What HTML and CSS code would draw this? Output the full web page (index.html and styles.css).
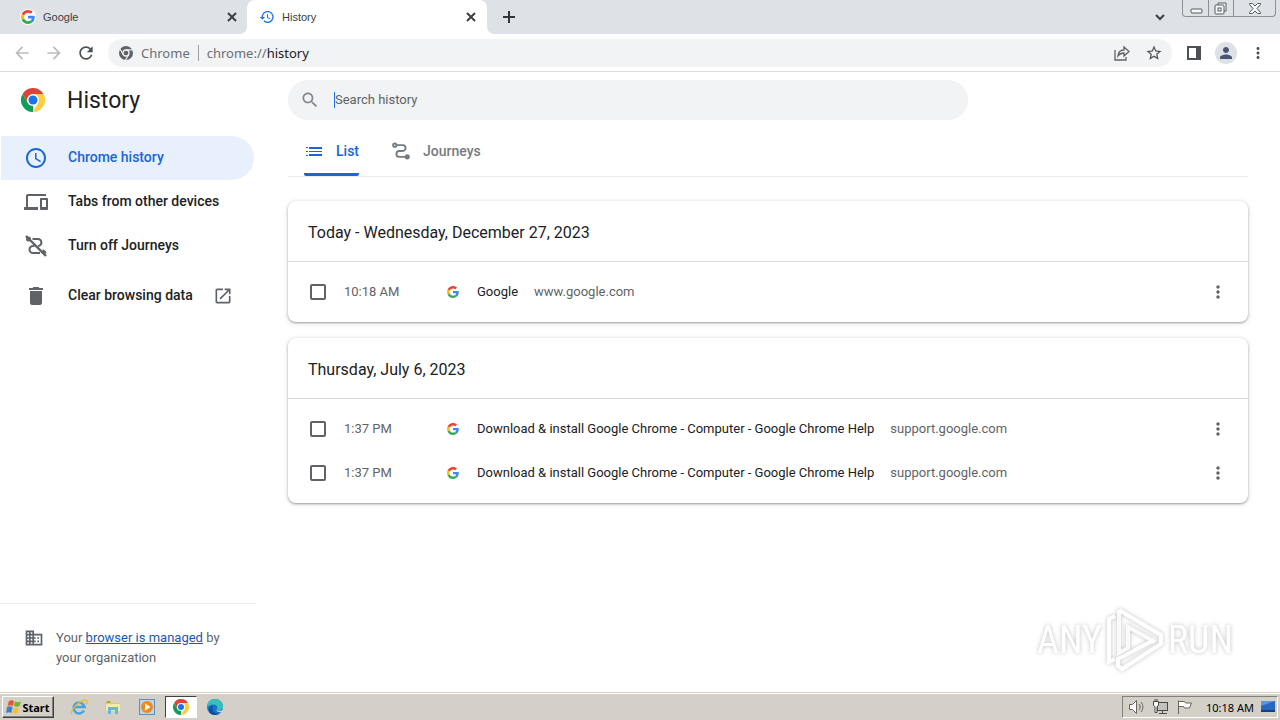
FILE: index.html
```html
<!DOCTYPE html>
<html lang="en">
<head>
    <meta charset="UTF-8">
    <meta name="viewport" content="width=device-width, initial-scale=1.0">
    <title>History</title>
    <link rel="stylesheet" href="styles.css">
</head>
<body>
    <!-- Shared symbols -->
    <svg class="defs" width="0" height="0">
        <symbol id="google" viewBox="0 0 48 48">
            <path fill="#ea4335" d="M24 9.5c3.54 0 6.71 1.22 9.21 3.6l6.85-6.85C35.9 2.38 30.47 0 24 0 14.62 0 6.51 5.38 2.56 13.22l7.98 6.19C12.43 13.72 17.74 9.5 24 9.5z"/>
            <path fill="#4285f4" d="M46.98 24.55c0-1.57-.15-3.09-.38-4.55H24v9.02h12.94c-.58 2.96-2.26 5.48-4.78 7.18l7.73 6c4.51-4.18 7.09-10.36 7.09-17.65z"/>
            <path fill="#fbbc05" d="M10.53 28.59c-.48-1.45-.76-2.99-.76-4.59s.27-3.14.76-4.59l-7.98-6.19C.92 16.46 0 20.12 0 24c0 3.88.92 7.54 2.56 10.78l7.97-6.19z"/>
            <path fill="#34a853" d="M24 48c6.48 0 11.93-2.13 15.89-5.81l-7.73-6c-2.15 1.45-4.92 2.3-8.16 2.3-6.26 0-11.57-4.22-13.47-9.91l-7.98 6.19C6.51 42.62 14.62 48 24 48z"/>
        </symbol>
        <symbol id="chrome" viewBox="0 0 48 48">
            <path fill="#0f9d58" d="M24 24 24 48A24 24 0 0 1 3.2 12L13.6 30z"/>
            <path fill="#ffcd40" d="M24 12H44.8A24 24 0 0 1 24 48L34.4 30z"/>
            <path fill="#db4437" d="M24 12H44.8A24 24 0 0 0 3.2 12L13.6 30 24 24z"/>
            <circle cx="24" cy="24" r="12" fill="#fff"/>
            <circle cx="24" cy="24" r="9" fill="#1a73e8"/>
        </symbol>
        <symbol id="dots" viewBox="0 0 24 24">
            <path d="M12 8c1.1 0 2-.9 2-2s-.9-2-2-2-2 .9-2 2 .9 2 2 2zm0 2c-1.1 0-2 .9-2 2s.9 2 2 2 2-.9 2-2-.9-2-2-2zm0 6c-1.1 0-2 .9-2 2s.9 2 2 2 2-.9 2-2-.9-2-2-2z"/>
        </symbol>
        <symbol id="close" viewBox="0 0 16 16">
            <path d="M4 4l8 8M12 4l-8 8" stroke="#3c4043" stroke-width="2"/>
        </symbol>
        <symbol id="arrow" viewBox="0 0 24 24">
            <path d="M20 11H7.83l5.59-5.59L12 4l-8 8 8 8 1.41-1.41L7.83 13H20v-2z"/>
        </symbol>
    </svg>

    <!-- Tab strip -->
    <div class="tabstrip">
        <div class="tab">
            <span class="tab-icon round"><svg width="14" height="14"><use href="#google"/></svg></span>
            <span class="tab-title">Google</span>
            <button class="tab-close" aria-label="Close"><svg width="16" height="16"><use href="#close"/></svg></button>
        </div>
        <div class="tab active">
            <span class="tab-icon"><svg width="16" height="16" viewBox="0 0 24 24" fill="#1a73e8"><path d="M13 3c-4.97 0-9 4.03-9 9H1l3.89 3.89.07.14L9 12H6c0-3.87 3.13-7 7-7s7 3.13 7 7-3.13 7-7 7c-1.93 0-3.68-.79-4.94-2.06l-1.42 1.42C8.27 19.99 10.51 21 13 21c4.97 0 9-4.03 9-9s-4.03-9-9-9zm-1 5v5l4.28 2.54.72-1.21-3.5-2.08V8H12z"/></svg></span>
            <span class="tab-title">History</span>
            <button class="tab-close" aria-label="Close"><svg width="16" height="16"><use href="#close"/></svg></button>
        </div>
        <button class="new-tab" aria-label="New tab"><svg width="14" height="14" viewBox="0 0 14 14"><path d="M7 1v12M1 7h12" stroke="#303640" stroke-width="2"/></svg></button>
        <button class="tab-search" aria-label="Search tabs"><svg width="12" height="12" viewBox="0 0 12 12"><path d="M2 4l4 4 4-4" fill="none" stroke="#3c4043" stroke-width="2"/></svg></button>
        <div class="window-controls">
            <button aria-label="Minimize"><svg width="14" height="14" viewBox="0 0 14 14"><rect x="2" y="8" width="11" height="4" rx="1"/></svg></button>
            <button aria-label="Restore"><svg width="14" height="14" viewBox="0 0 14 14"><path d="M4 4V2h8v8h-2"/><rect x="1" y="4" width="9" height="9" rx="1"/><rect x="4" y="7" width="3" height="3"/></svg></button>
            <button class="wide" aria-label="Close window"><svg width="14" height="14" viewBox="0 0 14 14"><path d="M1.5 2.5h3L7 5l2.500-2.500h3v1L9 7.500l3.500 4v1h-3L7 10l-2.500 2.500h-3v-1L5 7.500l-3.500-4z"/></svg></button>
        </div>
    </div>

    <!-- Toolbar -->
    <div class="toolbar">
        <button class="tool dim" aria-label="Back"><svg width="20" height="20"><use href="#arrow"/></svg></button>
        <button class="tool dim" aria-label="Forward"><svg class="flip" width="20" height="20"><use href="#arrow"/></svg></button>
        <button class="tool" aria-label="Reload"><svg width="20" height="20" viewBox="0 0 24 24"><path d="M17.65 6.35C16.2 4.9 14.21 4 12 4c-4.42 0-7.99 3.58-7.99 8s3.57 8 7.99 8c3.73 0 6.84-2.55 7.73-6h-2.08c-.82 2.33-3.04 4-5.65 4-3.31 0-6-2.69-6-6s2.69-6 6-6c1.66 0 3.14.69 4.22 1.78L13 11h7V4l-2.35 2.35z"/></svg></button>
        <div class="omnibox">
            <svg width="16" height="16" viewBox="0 0 16 16">
                <circle cx="8" cy="8" r="7" fill="#5f6368"/>
                <circle cx="8" cy="8" r="3" fill="none" stroke="#f1f3f4" stroke-width="1.3"/>
                <path d="M8 4.8h6.5M5.2 9.5 2 4M10.8 9.5 7.5 15" stroke="#f1f3f4" stroke-width="1.2"/>
            </svg>
            <span class="scheme">Chrome</span>
            <div class="url" role="textbox" aria-label="Address" contenteditable="true" spellcheck="false">chrome://<b>history</b></div>
            <button class="omni-btn" aria-label="Share"><svg width="18" height="18" viewBox="0 0 18 18" fill="none" stroke="#5f6368" stroke-width="1.3"><path d="M2 6v10h11v-3"/><path d="M5 12c.3-4 2.500-6 6-6V3l5 4.500-5 4.500V9c-2.500 0-4.500.8-6 3z"/></svg></button>
            <button class="omni-btn" aria-label="Bookmark"><svg width="18" height="18" viewBox="0 0 24 24"><path d="M22 9.24l-7.19-.62L12 2 9.19 8.63 2 9.24l5.46 4.73L5.82 21 12 17.27 18.18 21l-1.63-7.03L22 9.24zM12 15.4l-3.76 2.27 1-4.28-3.32-2.88 4.38-.38L12 6.1l1.71 4.04 4.38.38-3.32 2.88 1 4.28L12 15.4z"/></svg></button>
        </div>
        <button class="tool" aria-label="Side panel"><svg width="16" height="16" viewBox="0 0 16 16"><path fill-rule="evenodd" d="M1 1h14v14H1zM3 3v10h7V3z"/></svg></button>
        <button class="tool" aria-label="Profile"><span class="avatar"><svg width="18" height="18" viewBox="0 0 24 24" fill="#4a5672"><path d="M12 12c2.21 0 4-1.79 4-4s-1.79-4-4-4-4 1.79-4 4 1.79 4 4 4zm0 2c-2.67 0-8 1.34-8 4v2h16v-2c0-2.66-5.33-4-8-4z"/></svg></span></button>
        <button class="tool" aria-label="Menu"><svg width="18" height="18"><use href="#dots"/></svg></button>
    </div>

    <div class="page">
        <!-- Sidebar -->
        <aside class="sidebar">
            <div class="brand">
                <svg width="24" height="24"><use href="#chrome"/></svg>
                <h1>History</h1>
            </div>
            <nav>
                <a href="#" class="selected">
                    <svg width="24" height="24" viewBox="0 0 24 24"><path d="M11.99 2C6.47 2 2 6.48 2 12s4.47 10 9.99 10C17.52 22 22 17.52 22 12S17.52 2 11.99 2zM12 20c-4.42 0-8-3.58-8-8s3.58-8 8-8 8 3.58 8 8-3.58 8-8 8zm.5-13H11v6l5.25 3.15.75-1.23-4.5-2.67z"/></svg>
                    <span>Chrome history</span>
                </a>
                <a href="#">
                    <svg width="24" height="24" viewBox="0 0 24 24"><path d="M4 6h18V4H4c-1.1 0-2 .9-2 2v11H0v3h14v-3H4V6zm19 2h-6c-.55 0-1 .45-1 1v10c0 .55.45 1 1 1h6c.55 0 1-.45 1-1V9c0-.55-.45-1-1-1zm-1 9h-4v-7h4v7z"/></svg>
                    <span>Tabs from other devices</span>
                </a>
                <a href="#">
                    <svg width="24" height="24" viewBox="0 0 24 24" fill="none" stroke="#5f6368" stroke-width="2"><path d="M8.5 5H14a3.5 3.5 0 0 1 1.5 6.6L14 12M10.5 11.5 9 12a3.3 3.3 0 0 0 0 7h7"/><path d="M2 2l20 20" stroke-width="2.4"/><circle cx="4.5" cy="5" r="1.5"/><path d="M18.5 17a2.5 2.5 0 0 1 2.5 2.5" stroke-width="3"/></svg>
                    <span>Turn off Journeys</span>
                </a>
                <a href="#" class="clear">
                    <svg width="24" height="24" viewBox="0 0 24 24"><path d="M6 19c0 1.1.9 2 2 2h8c1.1 0 2-.9 2-2V7H6v12zM19 4h-3.5l-1-1h-5l-1 1H5v2h14V4z"/></svg>
                    <span>Clear browsing data</span>
                    <svg width="20" height="20" viewBox="0 0 24 24"><path d="M19 19H5V5h7V3H5c-1.11 0-2 .9-2 2v14c0 1.1.89 2 2 2h14c1.1 0 2-.9 2-2v-7h-2v7zM14 3v2h3.59l-9.83 9.83 1.41 1.41L19 6.41V10h2V3h-7z"/></svg>
                </a>
            </nav>
            <div class="managed">
                <svg width="20" height="20" viewBox="0 0 24 24"><path d="M12 7V3H2v18h20V7H12zM6 19H4v-2h2v2zm0-4H4v-2h2v2zm0-4H4V9h2v2zm0-4H4V5h2v2zm4 12H8v-2h2v2zm0-4H8v-2h2v2zm0-4H8V9h2v2zm0-4H8V5h2v2zm10 12h-8v-2h2v-2h-2v-2h2v-2h-2V9h8v10zm-2-8h-2v2h2v-2zm0 4h-2v2h2v-2z"/></svg>
                <p>Your <a href="#">browser is managed</a> by<br>your organization</p>
            </div>
        </aside>

        <!-- History list -->
        <main>
            <label class="search">
                <svg width="20" height="20" viewBox="0 0 24 24"><path d="M15.5 14h-.79l-.28-.27C15.41 12.59 16 11.11 16 9.5 16 5.91 13.09 3 9.5 3S3 5.91 3 9.5 5.91 16 9.5 16c1.61 0 3.09-.59 4.23-1.57l.27.28v.79l5 4.99L20.49 19l-4.99-5zm-6 0C7.01 14 5 11.99 5 9.5S7.01 5 9.5 5 14 7.01 14 9.5 11.99 14 9.5 14z"/></svg>
                <input type="text" placeholder="Search history" aria-label="Search history">
            </label>

            <div class="views">
                <button class="view current">
                    <svg width="20" height="20" viewBox="0 0 20 20"><path d="M2 6h2v1H2zM2 10h2v1H2zM2 14h2v1H2zM5 6h13v2H5zM5 10h13v1H5zM5 13h13v2H5z"/></svg>
                    List
                </button>
                <button class="view">
                    <svg width="20" height="20" viewBox="0 0 24 24" fill="none" stroke="#757b80" stroke-width="2.2"><circle cx="4.5" cy="5" r="2"/><path d="M6.5 5H14a3.5 3.5 0 0 1 0 7h-4a3.5 3.5 0 0 0 0 7h8"/><circle cx="19.5" cy="19" r="2" fill="#757b80"/></svg>
                    Journeys
                </button>
            </div>

            <section class="card">
                <h2>Today - Wednesday, December 27, 2023</h2>
                <ul>
                    <li>
                        <input type="checkbox" id="item1">
                        <span class="time">10:18 AM</span>
                        <svg class="favicon" width="12" height="12"><use href="#google"/></svg>
                        <label class="title" for="item1">Google</label>
                        <span class="domain">www.google.com</span>
                        <button class="more" aria-label="Actions"><svg width="20" height="20"><use href="#dots"/></svg></button>
                    </li>
                </ul>
            </section>

            <section class="card">
                <h2>Thursday, July 6, 2023</h2>
                <ul>
                    <li>
                        <input type="checkbox" id="item2">
                        <span class="time">1:37 PM</span>
                        <svg class="favicon" width="12" height="12"><use href="#google"/></svg>
                        <label class="title" for="item2">Download &amp; install Google Chrome - Computer - Google Chrome Help</label>
                        <span class="domain">support.google.com</span>
                        <button class="more" aria-label="Actions"><svg width="20" height="20"><use href="#dots"/></svg></button>
                    </li>
                    <li>
                        <input type="checkbox" id="item3">
                        <span class="time">1:37 PM</span>
                        <svg class="favicon" width="12" height="12"><use href="#google"/></svg>
                        <label class="title" for="item3">Download &amp; install Google Chrome - Computer - Google Chrome Help</label>
                        <span class="domain">support.google.com</span>
                        <button class="more" aria-label="Actions"><svg width="20" height="20"><use href="#dots"/></svg></button>
                    </li>
                </ul>
            </section>
        </main>

        <!-- Watermark -->
        <div class="watermark">
            <span>ANY</span>
            <svg width="60" height="66" viewBox="0 0 60 66" fill="none" stroke="#fff" stroke-width="4">
                <path d="M14 3v43l9-5V20l27 15" stroke="#fafafa"/>
                <path d="M14 3l42 25v9L17 62l-4-3v-7l36-19"/>
                <path d="M10 9l-6 3v43l6-3"/>
            </svg>
            <span>RUN</span>
        </div>
    </div>

    <!-- Taskbar -->
    <footer class="taskbar">
        <button class="start">
            <svg width="16" height="16" viewBox="0 0 16 16">
                <path fill="#e8562a" d="M3 2c2-1 3-1 5 0L7 7C5 6 3.500 6 1.500 7z"/>
                <path fill="#6fb52c" d="M9 2.500c2 1 4 1 6 0L13.500 7c-2 1-3.500 1-5.500 0z"/>
                <path fill="#3d7fd0" d="M1 8c2-1 3.500-1 5.500 0l-1 6c-2-1-3.500-1-5.500 0z"/>
                <path fill="#f5c02c" d="M7.500 8.500c2 1 3.500 1 5.500 0l-1.500 5.500c-2 1-3 1-5 0z"/>
            </svg>
            Start
        </button>
        <div class="apps">
            <button aria-label="Internet Explorer">
                <svg width="18" height="18" viewBox="0 0 18 18" fill="none"><path d="M14 12.5A5.5 5.5 0 1 1 14.5 9H5" stroke="#43a5e0" stroke-width="2.6"/><path d="M2 16.5C-1 14 8 3 15 2c3 0 2 3 1 4" stroke="#e8b93a" stroke-width="1.3"/></svg>
            </button>
            <button aria-label="Explorer">
                <svg width="18" height="18" viewBox="0 0 18 18"><path fill="#e5c868" d="M1 3h6l1 2h8v8H1z"/><path fill="#f7e9a6" d="M2 6h14v7H2z"/><path fill="#6cc04a" d="M3 3h3v2H3z"/><path fill="#69b5e2" d="M4 9h10v7h-3v-4H7v4H4z"/></svg>
            </button>
            <button aria-label="Media Player">
                <svg width="18" height="18" viewBox="0 0 18 18"><rect x="1.5" y="1.5" width="15" height="15" fill="#b8d6ee" stroke="#5a8fc0"/><circle cx="9" cy="9" r="6" fill="#f08a1c"/><path fill="#fff" d="M7 5.5 12.5 9 7 12.5z"/></svg>
            </button>
            <button class="pressed" aria-label="Chrome"><svg width="16" height="16"><use href="#chrome"/></svg></button>
            <button aria-label="Edge">
                <svg width="18" height="18" viewBox="0 0 18 18"><circle cx="9" cy="9" r="8" fill="#1473c4"/><path fill="#35c1b8" d="M1 9a8 8 0 0 1 16 0c0 3-4 3.500-6 2.500 1-2 0-5-3.500-5C4 6.500 2 8 1 9z"/><path fill="#d4d0c8" d="M10 11.5c2 1.5 5 1.500 7 .5l-1 2c-2 .5-5 .3-6-2.500z"/><path fill="#0c4fa0" d="M7 8c-2 4 1 8 6 8-6 3-11-1-10-5 .5-2 2-3 4-3z"/></svg>
            </button>
        </div>
        <div class="tray">
            <svg width="18" height="16" viewBox="0 0 18 16" fill="#fff" stroke="#66625c"><path d="M1.500 5.500h3l4-4v13l-4-4h-3z"/><path fill="none" d="M11 5c1.500 2 1.500 4 0 6M13 3c2.500 3 2.500 7 0 10"/></svg>
            <svg width="18" height="16" viewBox="0 0 18 16" fill="#fff" stroke="#4c4944"><rect x="5.5" y="3.5" width="10" height="8" fill="#c4c2be"/><path d="M7 14.500h8M10.500 12v2"/><path d="M1.500 2.500h5v4l-1.500 1v6h-2v-6l-1.500-1zM3 0v2M5 0v2"/></svg>
            <svg width="18" height="16" viewBox="0 0 18 16" fill="#fff" stroke="#66625c"><path d="M2.500 15V1.500M2.500 2.500h6l1 1.500h6l-2 5h-5l-1-1.500h-5"/></svg>
            <time>10:18 AM</time>
            <svg width="16" height="14" viewBox="0 0 16 14"><rect x="1" y="1" width="14" height="11" fill="#2568bd"/><path fill="#5b97dd" d="M1 1h14L1 6z"/><path fill="#1a3f78" d="M1 10h14v2H1z"/></svg>
        </div>
    </footer>
</body>
</html>
```
FILE: styles.css
```css
* {
    box-sizing: border-box;
}

body {
    margin: 0;
    min-height: 100vh;
    display: flex;
    flex-direction: column;
    background: #fff;
    color: #202124;
    font-family: Roboto, "Liberation Sans", sans-serif;
    font-size: 13px;
}

button {
    padding: 0;
    border: none;
    background: none;
    font: inherit;
    color: inherit;
    display: flex;
    align-items: center;
    justify-content: center;
}

svg {
    display: block;
    flex: none;
}

.defs {
    position: absolute;
}

/* Tab strip */
.tabstrip {
    display: flex;
    height: 34px;
    background: #dee1e6;
    font-family: "Liberation Sans", Arial, sans-serif;
    font-size: 11px;
}

.tab {
    display: flex;
    align-items: center;
    gap: 7px;
    width: 247px;
    padding: 0 7px 0 20px;
    color: #3c4043;
}

.tab.active {
    position: relative;
    width: 240px;
    padding: 0 8px 0 12px;
    background: #fff;
    border-radius: 8px 8px 0 0;
}

.tab.active::before,
.tab.active::after {
    content: "";
    position: absolute;
    bottom: 0;
    width: 8px;
    height: 8px;
}

.tab.active::before {
    left: -8px;
    background: radial-gradient(circle at 0 0, transparent 8px, #fff 8px);
}

.tab.active::after {
    right: -8px;
    background: radial-gradient(circle at 100% 0, transparent 8px, #fff 8px);
}

.tab-icon {
    display: flex;
    align-items: center;
    justify-content: center;
    width: 16px;
    height: 16px;
}

.tab-icon.round {
    background: #fff;
    border-radius: 50%;
}

.tab-title {
    flex: 1;
}

.new-tab {
    width: 28px;
    margin-left: 8px;
}

.tab-search {
    width: 28px;
    margin-left: auto;
    margin-right: 8px;
}

.window-controls {
    display: flex;
    height: 17px;
    margin-right: 4px;
    border: 1px solid #8b8f96;
    border-top: none;
    border-radius: 0 0 4px 4px;
}

.window-controls button {
    width: 25px;
}

.window-controls button + button {
    border-left: 1px solid #8b8f96;
}

.window-controls .wide {
    width: 42px;
}

.window-controls svg {
    fill: #f6f7f8;
    stroke: #565a60;
}

/* Toolbar */
.toolbar {
    display: flex;
    align-items: center;
    gap: 4px;
    height: 38px;
    padding: 0 8px;
    border-bottom: 1px solid #dadce0;
    fill: #4d5156;
}

.tool {
    width: 28px;
    height: 28px;
}

.dim {
    fill: #babcbe;
}

.flip {
    transform: rotate(180deg);
}

.omnibox {
    flex: 1;
    display: flex;
    align-items: center;
    height: 28px;
    margin: 0 4px;
    padding: 0 4px 0 10px;
    border-radius: 14px;
    background: #f1f3f4;
    color: #6b6f74;
    font-family: "Noto Sans", "Open Sans", sans-serif;
    font-size: 13px;
}

.scheme {
    margin-left: 7px;
    padding-right: 8px;
    border-right: 1px solid #9aa0a6;
    line-height: 16px;
}

.url {
    flex: 1;
    padding-left: 8px;
    outline: none;
}

.url b {
    font-weight: 400;
    color: #202124;
}

.omni-btn {
    width: 28px;
    height: 28px;
    margin-left: 4px;
}

.avatar {
    display: flex;
    align-items: center;
    justify-content: center;
    width: 22px;
    height: 22px;
    border-radius: 50%;
    background: #dee1e6;
}

/* Page */
.page {
    position: relative;
    flex: 1;
    display: flex;
}

.sidebar {
    display: flex;
    flex-direction: column;
    width: 256px;
    fill: #5f6368;
}

.brand {
    display: flex;
    align-items: center;
    gap: 22px;
    height: 56px;
    margin-bottom: 8px;
    padding-left: 21px;
}

h1 {
    margin: 0;
    font-size: 23px;
    font-weight: 400;
}

nav a {
    display: flex;
    align-items: center;
    gap: 20px;
    height: 44px;
    margin: 0 2px 0 1px;
    padding-left: 23px;
    border-radius: 0 22px 22px 0;
    color: #202124;
    font-size: 14px;
    font-weight: 500;
    text-decoration: none;
}

nav span {
    padding-bottom: 2px;
}

nav .selected {
    background: #e8f0fe;
    color: #1967d2;
    fill: #1967d2;
}

nav .clear {
    margin-top: 6px;
}

.managed {
    display: flex;
    gap: 12px;
    margin-top: auto;
    padding: 24px;
    border-top: 1px solid #ececee;
    color: #5f6368;
    line-height: 20px;
}

.managed p {
    margin: 0;
}

.managed a {
    color: #1558b0;
}

main {
    flex: 1;
    padding: 8px 32px;
}

.search {
    display: flex;
    align-items: center;
    max-width: 680px;
    height: 40px;
    padding: 0 12px;
    border-radius: 20px;
    background: #f1f3f4;
    fill: #80868b;
}

.search input {
    flex: 1;
    height: 16px;
    margin-left: 14px;
    padding: 0 0 2px;
    border: none;
    border-left: 1px solid #1a73e8;
    outline: none;
    background: none;
    font: inherit;
}

.search input::placeholder {
    color: #5f6368;
}

.views {
    display: flex;
    gap: 32px;
    height: 49px;
    margin: 8px 0 24px;
    padding-left: 16px;
    border-bottom: 1px solid #e8eaed;
}

.view {
    gap: 12px;
    border-bottom: 3px solid transparent;
    color: #757b80;
    font-size: 14px;
    font-weight: 500;
}

.view.current {
    background: linear-gradient(#1967d2, #1967d2) bottom / 100% 3px no-repeat border-box;
    border-radius: 2px;
    color: #1967d2;
    fill: #1967d2;
}

.card {
    margin-bottom: 16px;
    border-radius: 8px;
    background: #fff;
    box-shadow: 0 1px 2px rgba(60, 64, 67, 0.4), 0 1px 4px 1px rgba(60, 64, 67, 0.15);
}

.card h2 {
    height: 61px;
    margin: 0;
    padding: 0 20px;
    border-bottom: 1px solid #d8dadd;
    font-size: 16px;
    font-weight: 400;
    line-height: 64px;
}

.card ul {
    margin: 0;
    padding: 8px 0;
    list-style: none;
}

.card li {
    display: flex;
    align-items: center;
    height: 44px;
    padding: 0 20px 0 22px;
    color: #5f6368;
    fill: #5f6368;
}

.card input {
    appearance: none;
    width: 16px;
    height: 16px;
    margin: 0 18px 0 0;
    border: 2px solid #5f6368;
    border-radius: 2px;
}

.time,
.title,
.domain {
    padding-bottom: 2px;
}

.time {
    width: 103px;
}

.title {
    margin: 0 16px 0 18px;
    color: #202124;
}

.more {
    margin-left: auto;
}

.watermark {
    position: absolute;
    right: 47px;
    bottom: 19px;
    display: flex;
    align-items: center;
    gap: 3px;
    color: #fff;
    font-family: "Liberation Sans Narrow", "Roboto Condensed", "Liberation Sans", sans-serif;
    font-size: 38px;
    filter: drop-shadow(0 0 2px rgba(0, 0, 0, 0.25));
    pointer-events: none;
}

/* Taskbar */
.taskbar {
    display: flex;
    align-items: center;
    height: 28px;
    padding: 1px 2px 0;
    border-top: 1px solid #d4d0c8;
    background: #d4d0c8;
    box-shadow: inset 0 1px #fff;
    color: #000;
    font-family: "Noto Sans", "Open Sans", sans-serif;
    font-size: 11px;
}

.start {
    width: 52px;
    height: 22px;
    border: 1px solid;
    border-color: #fff #404040 #404040 #fff;
    box-shadow: inset -1px -1px #808080;
    font-weight: 700;
}

.apps {
    display: flex;
    gap: 2px;
    margin-left: 9px;
}

.apps button {
    width: 32px;
    height: 22px;
}

.apps .pressed {
    border: 1px solid;
    border-color: #404040 #fff #fff #404040;
    background: #fff;
}

.tray {
    display: flex;
    align-items: center;
    gap: 6px;
    height: 22px;
    margin-left: auto;
    padding: 0 1px 0 5px;
    border: 1px solid;
    border-color: #808080 #fff #fff #808080;
}

.tray time {
    margin-left: 6px;
}
```
